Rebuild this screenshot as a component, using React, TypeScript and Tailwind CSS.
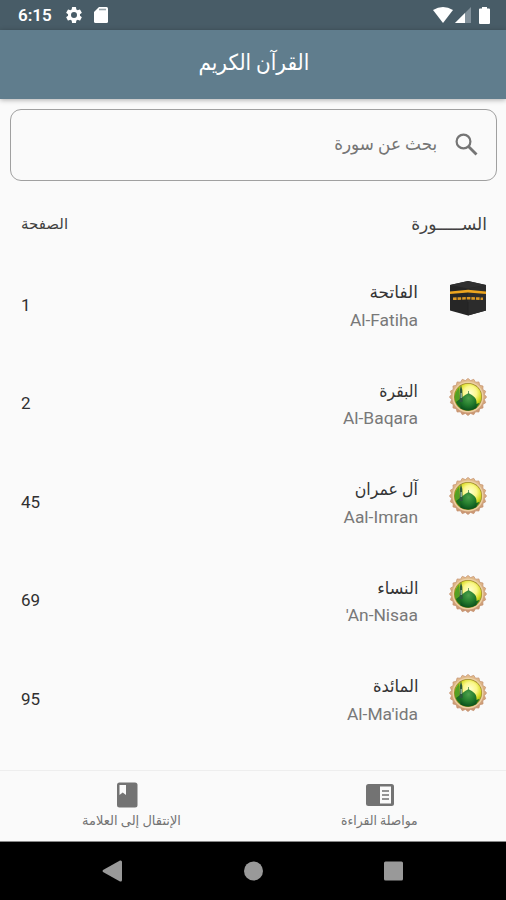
const surahs = [
  { ar: 'الفاتحة', en: 'Al-Fatiha', page: 1, fit: '' },
  { ar: 'البقرة', en: 'Al-Baqara', page: 2, fit: 'scale-x-[.92]' },
  { ar: 'آل عمران', en: 'Aal-Imran', page: 45, fit: 'scale-x-[.93]' },
  { ar: 'النساء', en: "'An-Nisaa", page: 69, fit: 'scale-x-[.95]' },
  { ar: 'المائدة', en: "Al-Ma'ida", page: 95, fit: 'scale-x-[.96]' },
];

function Kaaba() {
  return (
    <svg className="mt-px" width="38" height="38" viewBox="0 0 38 38">
      <path d="M1 5 19 1 37 5V30.500L19 35.500 1 30.500Z" fill="#262626" />
      <path d="M1 5 19 1 37 5 19 8.500Z" fill="#303030" />
      <path d="M19 8.500 37 5V30.500L19 35.500Z" fill="#2c2c2c" />
      <path d="M1 11.500 19 9.800 37 11.500V14L19 12.500 1 14Z" fill="#eda51f" />
      <path d="M4 18.800 19 18.200 34 18.800" fill="none" stroke="#dc9822" strokeWidth="2.600" strokeDasharray="3.600 1" />
      <path d="M19 22V35" stroke="#222" strokeWidth=".8" />
    </svg>
  );
}

const points = Array.from({ length: 40 }, (_, i) => {
  const a = (i * Math.PI) / 20;
  const r = i % 2 ? 16.6 : 18.6;
  return `${19 + Math.sin(a) * r},${19 - Math.cos(a) * r}`;
}).join(' ');

function Mosque() {
  return (
    <svg className="mt-px" width="38" height="38" viewBox="0 0 38 38">
      <defs>
        <linearGradient id="rim" x1="0" y1="0" x2="0" y2="1">
          <stop offset="0" stopColor="#e3bd8d" />
          <stop offset="1" stopColor="#c99572" />
        </linearGradient>
        <radialGradient id="sky" cx=".58" cy=".35" r=".62">
          <stop offset="0" stopColor="#ffffd0" />
          <stop offset=".4" stopColor="#fbf78a" />
          <stop offset=".68" stopColor="#d8dc22" />
          <stop offset="1" stopColor="#6b9c12" />
        </radialGradient>
        <radialGradient id="dome" cx=".5" cy=".3" r=".75">
          <stop offset="0" stopColor="#4da04c" />
          <stop offset=".5" stopColor="#27802f" />
          <stop offset="1" stopColor="#084d1b" />
        </radialGradient>
      </defs>
      <polygon points={points} fill="url(#rim)" stroke="#c4916d" strokeWidth=".7" strokeLinejoin="round" />
      <circle cx="19" cy="19" r="15.500" fill="#ecd0a4" />
      <circle cx="19" cy="19" r="14" fill="#a18a2c" />
      <circle cx="19" cy="19" r="13.300" fill="url(#sky)" />
      <path d="M5.700 19Q6.500 13 10.500 9V29Q6 25 5.700 19Z" fill="#55a023" />
      <path d="M7 24 11 21 27 26 30.500 25C28 30 24 32.300 19 32.300S9 29.500 7 24Z" fill="#1b6d1f" />
      <path d="M11.500 30.500V24C11.500 19.500 15.500 17.500 19.500 15 23.500 17.500 27.500 19.500 27.500 24V30Q20 34.500 11.500 30.500Z" fill="url(#dome)" />
      <path d="M19.500 13V16" stroke="#4a8748" strokeWidth=".8" />
      <path d="M12 7 13.300 12 13.700 24H10.400L10.800 12Z" fill="#2c5a3c" />
      <path d="M12.200 15V20" stroke="#9fbeae" strokeWidth="1.200" />
    </svg>
  );
}

export default function App() {
  return (
    <div className="flex h-[900px] w-[506px] flex-col overflow-hidden bg-[#fafafa] font-['Roboto','DejaVu_Sans',sans-serif]">
      <div className="flex h-[30px] shrink-0 items-center bg-[#485c67] pl-[18px] pr-[16px] text-white">
        <span className="w-[46px] text-[17px] font-semibold leading-none">6:15</span>
        <svg width="20" height="20" viewBox="0 0 24 24" fill="currentColor">
          <path d="M19.140 12.940c.040-.300.060-.610.060-.940 0-.320-.020-.640-.070-.940l2.030-1.580a.490.490 0 0 0 .120-.610l-1.920-3.320a.490.490 0 0 0-.590-.220l-2.390.960a7 7 0 0 0-1.620-.940L14.400 2.810a.480.480 0 0 0-.480-.410h-3.840a.480.480 0 0 0-.470.410l-.360 2.540a7.300 7.300 0 0 0-1.620.940l-2.390-.960a.490.490 0 0 0-.590.220L2.730 8.870a.480.480 0 0 0 .120.610l2.030 1.580a7 7 0 0 0 0 1.880l-2.030 1.580a.490.490 0 0 0-.120.610l1.920 3.320c.120.220.370.290.590.220l2.390-.960c.500.380 1.030.700 1.620.940l.360 2.540c.050.240.240.410.480.410h3.840c.240 0 .440-.170.470-.410l.360-2.540a7 7 0 0 0 1.620-.940l2.390.960c.220.080.470 0 .590-.220l1.920-3.320a.490.490 0 0 0-.120-.610ZM12 15.600a3.600 3.600 0 1 1 0-7.200 3.600 3.600 0 0 1 0 7.200Z" />
        </svg>
        <svg className="ml-2.5" width="14" height="16" viewBox="0 0 14 16">
          <path d="M5 0h7.500Q14 0 14 1.500v13q0 1.500-1.500 1.500h-11Q0 16 0 14.500V5Z" fill="white" />
          <path d="M5 2.500h7" stroke="#98a4aa" strokeWidth="1.600" />
        </svg>
        <div className="ml-auto flex items-center">
          <svg width="20" height="16" viewBox="0 0 20 16"><path d="M0 3Q10-3 20 3L10 16Z" fill="white" /></svg>
          <svg className="ml-[2px]" width="16" height="16" viewBox="0 0 16 16"><path d="M16 0V16H0Z" fill="#81909a" /><path d="M10 6V16H0Z" fill="white" /></svg>
          <svg className="ml-[8px]" width="11" height="17" viewBox="0 0 11 17"><path d="M3 0h5v1.500h2q1 0 1 1v13.500q0 1-1 1H1q-1 0-1-1V2.500q0-1 1-1h2Z" fill="white" /></svg>
        </div>
      </div>
      <header dir="rtl" className="flex h-[69px] shrink-0 items-center justify-center bg-[#607d8d] pb-[4px] text-[22px] text-white shadow-[0_1px_5px_#00000050]">
        <h1 className="ml-px scale-x-[.91]">القرآن الكريم</h1>
      </header>
      <div dir="rtl" className="mx-[10px] mt-[10px] flex h-[72px] w-[487px] shrink-0 items-center rounded-[11px] border border-[#a0a0a0] pr-[18px] text-[#757575]">
        <svg className="-mt-px" width="23" height="23" viewBox="0 0 23 23" fill="none" stroke="currentColor" strokeWidth="2.200">
          <circle cx="8.500" cy="8.500" r="6.900" /><path d="m13.500 13.500 8 8" strokeWidth="2.800" />
        </svg>
        <span className="mr-[18px] origin-right scale-x-[.935] pb-[2px] text-[18px] leading-none">بحث عن سورة</span>
      </div>
      <div dir="rtl" className="flex h-[68px] shrink-0 items-center justify-between pl-[21px] pr-[19px] pt-[18px] text-[#414141]">
        <span className="text-[17px] leading-none">الســـــورة</span>
        <span className="text-[15px] leading-none">الصفحة</span>
      </div>
      <main className="flex min-h-0 grow flex-col overflow-hidden">
        {surahs.map((s, i) => (
          <div key={s.en} dir="rtl" className="flex h-[98.500px] shrink-0 items-start pl-[21px] pr-[19px] pt-[29.500px]">
            {i === 0 ? <Kaaba /> : <Mosque />}
            <div className="mr-[31px] flex flex-col items-start">
              <span className={`flex h-[28px] origin-right items-center text-[17px] leading-none text-[#333] ${s.fit}`}>{s.ar}</span>
              <span dir="ltr" className="flex h-[28px] items-center text-[17.400px] leading-none text-[#787878]">{s.en}</span>
            </div>
            <span className="mr-auto mt-[14.500px] flex h-[24px] items-center text-[17px] leading-none text-[#303030]">{s.page}</span>
          </div>
        ))}
      </main>
      <nav dir="rtl" className="grid h-[72px] shrink-0 grid-cols-2 border-b border-t border-b-[#888] border-t-[#eee] text-[13px] text-[#737373]">
        <div className="flex flex-col items-center pt-[9px]">
          <svg width="28" height="30" viewBox="0 0 28 30"><rect y="4" width="28" height="22" rx="2.500" fill="#737373" /><path d="M14 6.500H25V23.500H14Z" fill="#fafafa" /><path d="M16 11h7m-7 4h7m-7 4h7" stroke="#737373" strokeWidth="1.600" /></svg>
          <span className="mt-[3px] scale-x-[.95] leading-[16px]">مواصلة القراءة</span>
        </div>
        <div className="flex flex-col items-center pt-[9px]">
          <svg width="28" height="30" viewBox="0 0 28 30"><rect x="4" y="2.500" width="20.500" height="25" rx="2.500" fill="#737373" /><path d="M6.500 5H13V15L9.700 12.500 6.500 15Z" fill="#fafafa" /></svg>
          <span className="ml-[-10px] mr-0 mt-[3px] translate-x-[10px] leading-[16px]">الإنتقال إلى العلامة</span>
        </div>
      </nav>
      <div className="h-[58px] shrink-0 bg-black">
        <svg className="block" width="506" height="58" viewBox="0 0 506 58" fill="#999">
          <path d="M103 28 120 18.500Q122 18 122 20V38Q122 40 120 39.500L103 30Q102 29 103 28Z" /><circle cx="253.500" cy="29" r="9.500" /><rect x="384" y="19.500" width="19" height="19" rx="1.500" />
        </svg>
      </div>
    </div>
  );
}
